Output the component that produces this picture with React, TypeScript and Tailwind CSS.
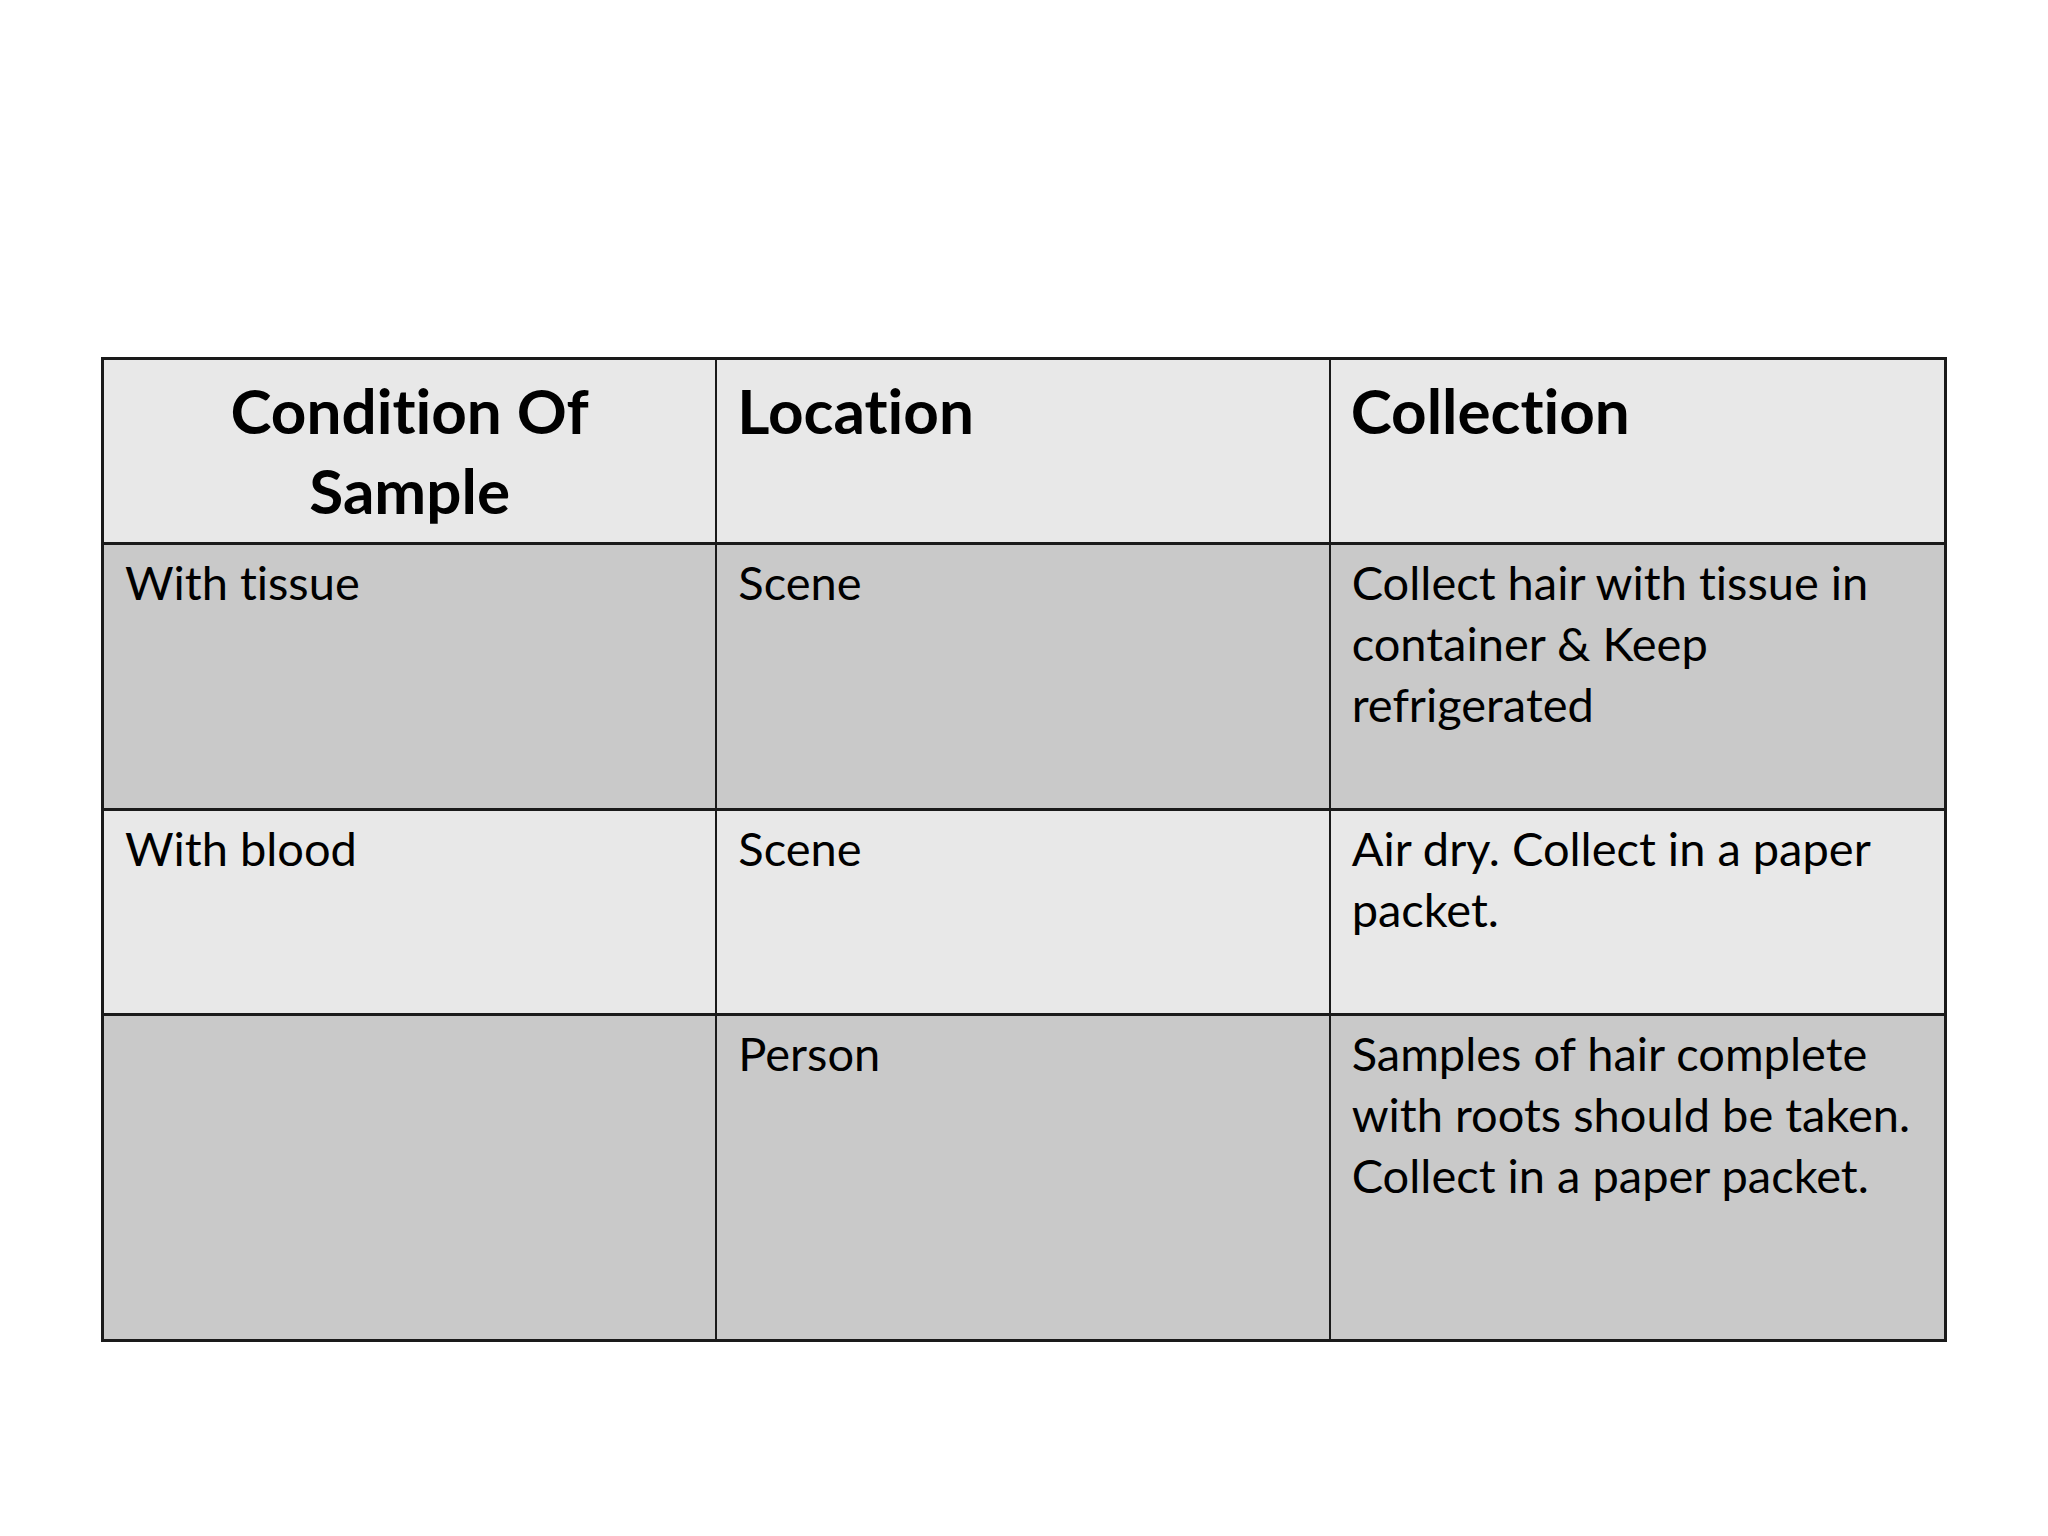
const rows = [
  {
    bg: "bg-[#c9c9c9]",
    cells: ["With tissue", "Scene", "Collect hair with tissue in container & Keep refrigerated"],
  },
  {
    bg: "bg-[#e8e8e8]",
    cells: ["With blood", "Scene", "Air dry. Collect in a paper packet."],
  },
  {
    bg: "bg-[#c9c9c9]",
    cells: ["", "Person", "Samples of hair complete with roots should be taken. Collect in a paper packet."],
  },
];

export default function App() {
  return (
    <div
      className="min-h-screen w-full bg-white pt-[357px] pl-[101px] [font-variant-ligatures:none]"
      style={{ fontFamily: "Lato, 'Open Sans', sans-serif" }}
    >
      <div className="grid w-[1846px] grid-cols-3 grid-rows-[185px_266px_205px_323px] border-[3px] border-[#1a1a1a] text-black">
        {/* Header */}
        <div className="border-r-2 border-b-[3px] border-[#1a1a1a] bg-[#e8e8e8] px-[22px] pt-[10px] text-center text-[62px] font-bold leading-[80px]">
          Condition Of Sample
        </div>
        <div className="border-r-2 border-b-[3px] border-[#1a1a1a] bg-[#e8e8e8] px-[20px] pt-[10px] text-[62px] font-bold leading-[80px]">
          Location
        </div>
        <div className="border-b-[3px] border-[#1a1a1a] bg-[#e8e8e8] px-[20px] pt-[10px] text-[62px] font-bold leading-[80px]">
          Collection
        </div>

        {/* Body */}
        {rows.map((row, r) =>
          row.cells.map((text, c) => (
            <div
              key={`${r}-${c}`}
              className={`${row.bg} border-[#1a1a1a] px-[21px] pt-[7px] text-[47px] leading-[61px] ${c < 2 ? "border-r-2" : ""} ${r < 2 ? "border-b-[3px]" : ""}`}
            >
              {text}
            </div>
          ))
        )}
      </div>
    </div>
  );
}
